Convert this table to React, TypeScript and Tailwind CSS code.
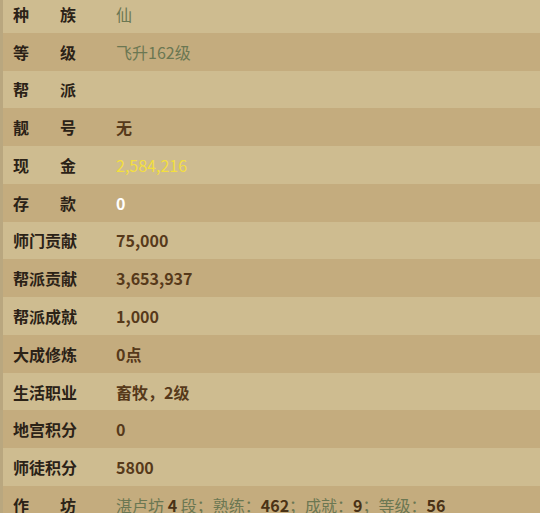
type Part = { text: string; tone: "green" | "dark" };

type Row = {
    label: string;
    value?: string;
    tone?: "green" | "brown" | "gold" | "white";
    parts?: Part[];
};

const rows: Row[] = [
    { label: "种族", value: "仙", tone: "green" },
    { label: "等级", value: "飞升162级", tone: "green" },
    { label: "帮派" },
    { label: "靓号", value: "无", tone: "brown" },
    { label: "现金", value: "2,584,216", tone: "gold" },
    { label: "存款", value: "0", tone: "white" },
    { label: "师门贡献", value: "75,000", tone: "brown" },
    { label: "帮派贡献", value: "3,653,937", tone: "brown" },
    { label: "帮派成就", value: "1,000", tone: "brown" },
    { label: "大成修炼", value: "0点", tone: "brown" },
    { label: "生活职业", value: "畜牧，2级", tone: "brown" },
    { label: "地宫积分", value: "0", tone: "brown" },
    { label: "师徒积分", value: "5800", tone: "brown" },
    {
        label: "作坊",
        parts: [
            { text: "湛卢坊", tone: "green" },
            { text: " 4 ", tone: "dark" },
            { text: "段；熟练：", tone: "green" },
            { text: "462", tone: "dark" },
            { text: "；成就：", tone: "green" },
            { text: "9", tone: "dark" },
            { text: "；等级：", tone: "green" },
            { text: "56", tone: "dark" },
        ],
    },
];

const toneClass = {
    green: "font-normal text-[#6b7752]",
    brown: "font-bold text-[#56391a]",
    gold: "font-normal text-[#f3df3f]",
    white: "font-bold text-white",
};

function Label({ text }: { text: string }) {
    if (text.length === 2) {
        return (
            <div className="flex w-[63px] justify-between">
                <span>{text[0]}</span>
                <span>{text[1]}</span>
            </div>
        );
    }
    return <div>{text}</div>;
}

export default function App() {
    return (
        <div
            className="h-[513px] w-[540px] overflow-hidden border-l-[3px] border-[#b9a77f] bg-[#cdbb8e]"
            style={{ fontFamily: '"Noto Sans CJK SC", "Noto Sans", sans-serif' }}
        >
            <div className="-mt-[5px]">
                {rows.map((row, i) => (
                    <div
                        key={row.label}
                        className={`flex h-[37.77px] items-center text-[16px] leading-none ${
                            i % 2 === 0 ? "bg-[#cebc90]" : "bg-[#c4ac7e]"
                        }`}
                    >
                        <div className="w-[113px] pl-[10px] font-bold text-[#2b2217]">
                            <Label text={row.label} />
                        </div>
                        {row.parts ? (
                            <div className="whitespace-pre">
                                {row.parts.map((p, j) => (
                                    <span
                                        key={j}
                                        className={
                                            p.tone === "green"
                                                ? "font-normal text-[#6b7752]"
                                                : "font-bold text-[#4a3216]"
                                        }
                                    >
                                        {p.text}
                                    </span>
                                ))}
                            </div>
                        ) : (
                            row.value && (
                                <div className={toneClass[row.tone ?? "brown"]}>{row.value}</div>
                            )
                        )}
                    </div>
                ))}
            </div>
        </div>
    );
}
